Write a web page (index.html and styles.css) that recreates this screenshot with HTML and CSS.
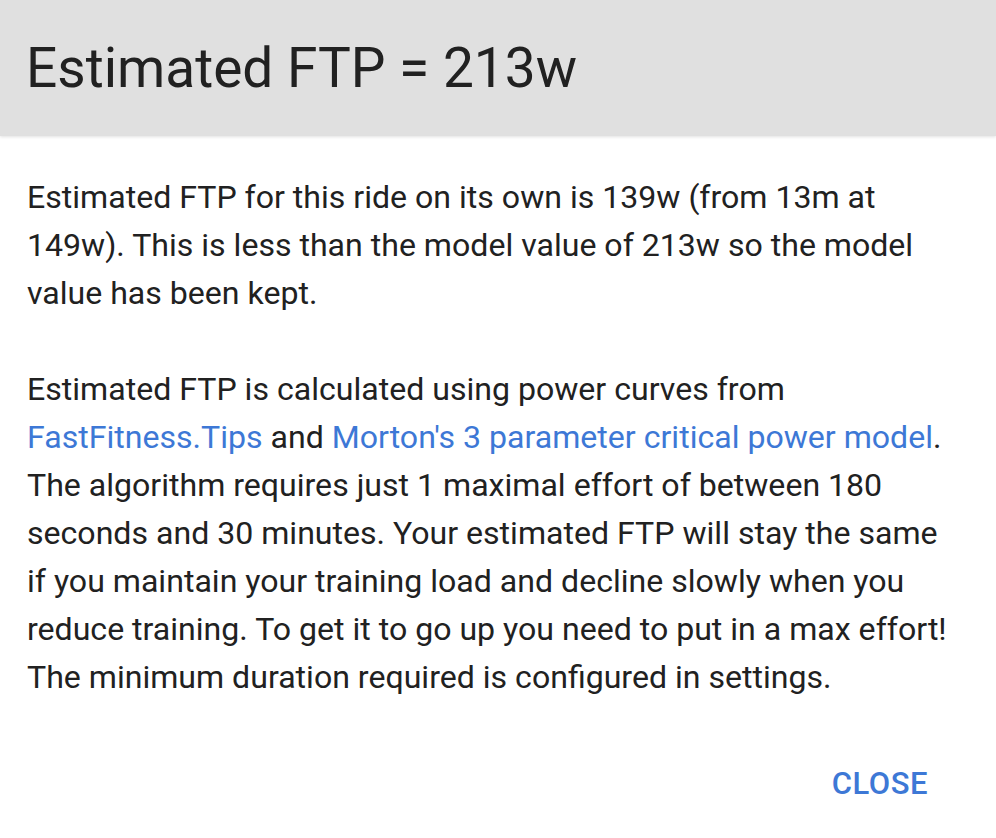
FILE: index.html
```html
<!DOCTYPE html>
<html>
<head>
<meta charset="utf-8">
<link rel="stylesheet" href="styles.css">
</head>
<body>
<div class="dialog">
  <header class="header">
    <h1 class="title">Estimated FTP = 213w</h1>
  </header>
  <div class="content">
    <p class="para">Estimated FTP for this ride on its own is 139w (from 13m at 149w). This is less than the model value of 213w so the model value has been kept.</p>
    <p class="para">Estimated FTP is calculated using power curves from <a class="link" href="#">FastFitness.Tips</a> and <a class="link" href="#">Morton's 3 parameter critical power model</a>. The algorithm requires just 1 maximal effort of between 180 seconds and 30 minutes. Your estimated FTP will stay the same if you maintain your training load and decline slowly when you reduce training. To get it to go up you need to put in a max effort! The minimum duration required is configured in settings.</p>
  </div>
  <div class="actions">
    <button class="btn">CLOSE</button>
  </div>
</div>
</body>
</html>
```

FILE: styles.css
```css
html, body {
  margin: 0;
  padding: 0;
  background: #ffffff;
}
body {
  font-family: Roboto, "Noto Sans", sans-serif;
  color: #212121;
  width: 996px;
  height: 838px;
  overflow: hidden;
}
.dialog {
  display: flex;
  flex-direction: column;
}
.header {
  background: #e0e0e0;
  height: 136px;
  box-sizing: border-box;
  padding: 0 26px;
  display: flex;
  align-items: center;
  box-shadow: 0 1px 3px rgba(0,0,0,0.12);
}
.title {
  margin: 0;
  font-weight: 400;
  font-size: 55px;
  line-height: 1;
  color: #212121;
}
.content {
  padding: 37px 42px 0 27px;
}
.para {
  margin: 0 0 48px 0;
  font-size: 32.1px;
  line-height: 48px;
}
.para:last-child {
  margin-bottom: 0;
}
.link {
  color: #3d78d6;
  text-decoration: none;
}
.actions {
  display: flex;
  justify-content: flex-end;
  padding: 64px 68px 0 0;
}
.btn {
  font-family: Roboto, "Noto Sans", sans-serif;
  font-weight: 500;
  font-size: 31px;
  line-height: normal;
  color: #3d78d6;
  background: none;
  border: none;
  padding: 0;
  margin: 0;
  letter-spacing: 0.5px;
}
```
